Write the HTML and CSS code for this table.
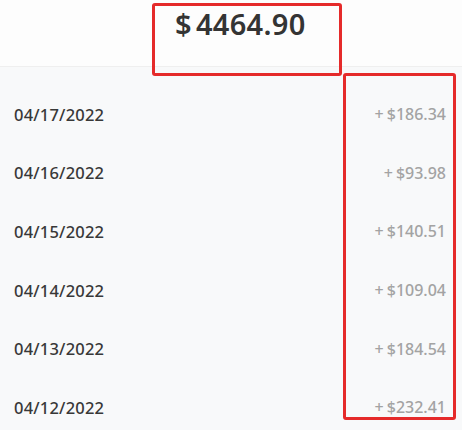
FILE: index.html
```html
<!DOCTYPE html>
<html>
<head>
<meta charset="utf-8">
<link rel="stylesheet" href="styles.css">
</head>
<body>
<div class="page">
  <header class="total-bar">
    <div class="total">$<span class="gap"></span>4464.90</div>
  </header>
  <ul class="list">
    <li class="row"><span class="date">04/17/2022</span><span class="amt">+<span class="sp"></span>$186.34</span></li>
    <li class="row"><span class="date">04/16/2022</span><span class="amt">+<span class="sp"></span>$93.98</span></li>
    <li class="row"><span class="date">04/15/2022</span><span class="amt">+<span class="sp"></span>$140.51</span></li>
    <li class="row"><span class="date">04/14/2022</span><span class="amt">+<span class="sp"></span>$109.04</span></li>
    <li class="row"><span class="date">04/13/2022</span><span class="amt">+<span class="sp"></span>$184.54</span></li>
    <li class="row"><span class="date">04/12/2022</span><span class="amt">+<span class="sp"></span>$232.41</span></li>
  </ul>
  <div class="mark mark-total"></div>
  <div class="mark mark-amounts"></div>
</div>
</body>
</html>
```
FILE: styles.css
```css
html, body {
  margin: 0;
  padding: 0;
  background: #f8f9fa;
}
.page {
  position: relative;
  width: 462px;
  height: 430px;
  overflow: hidden;
  font-family: "Noto Sans", "Open Sans", sans-serif;
}
.total-bar {
  height: 66px;
  background: #fdfdfd;
  border-bottom: 1px solid #efefef;
  box-sizing: content-box;
  padding-left: 175px;
}
.total {
  padding-top: 4px;
  font-size: 29px;
  font-weight: 600;
  color: #343434;
  line-height: 40px;
  letter-spacing: 0.3px;
}
.gap { display: inline-block; width: 4px; }
.list {
  list-style: none;
  margin: 0;
  padding: 18px 0 0 0;
}
.row {
  height: 58.6px;
  display: flex;
  align-items: center;
  justify-content: space-between;
  padding: 0 16px 0 14px;
}
.date {
  font-size: 16.5px;
  font-weight: 500;
  color: #383838;
  letter-spacing: 0.2px;
}
.amt {
  font-size: 16px;
  font-weight: 500;
  color: #a3a3a3;
}
.sp { display: inline-block; width: 3px; }
.mark {
  position: absolute;
  border: 3px solid #e52a2a;
  border-radius: 3px;
  box-sizing: border-box;
}
.mark-total {
  left: 152px;
  top: 3px;
  width: 190px;
  height: 73px;
}
.mark-amounts {
  left: 343px;
  top: 73px;
  width: 113px;
  height: 347px;
}
```
